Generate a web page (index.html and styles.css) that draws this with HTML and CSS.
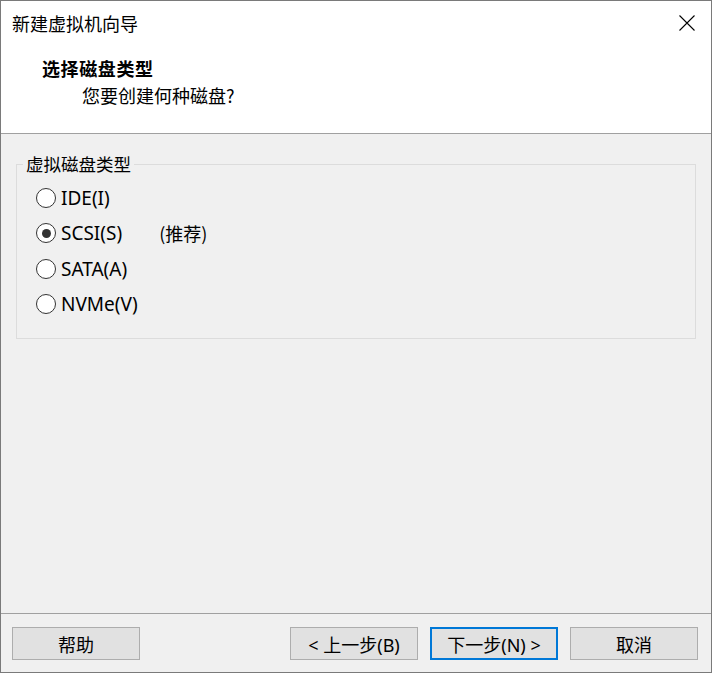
FILE: index.html
```html
<!DOCTYPE html>
<html lang="zh-CN">
<head>
<meta charset="utf-8">
<title>新建虚拟机向导</title>
<link rel="stylesheet" href="styles.css">
</head>
<body>
<div class="window">
  <div class="top">
    <div class="titlebar">
      <span class="title">新建虚拟机向导</span>
      <span class="close">
        <svg width="16" height="16" viewBox="0 0 16 16"><path d="M0.5 0.5 L15.5 15.5 M15.5 0.5 L0.5 15.5" stroke="#000" stroke-width="1.1" fill="none"/></svg>
      </span>
    </div>
    <div class="header">
      <div class="heading">选择磁盘类型</div>
      <div class="subheading">您要创建何种磁盘?</div>
    </div>
  </div>
  <div class="body">
    <fieldset class="group">
      <legend class="legend">虚拟磁盘类型</legend>
      <div class="option"><span class="radio"></span><span class="label">IDE(I)</span></div>
      <div class="option"><span class="radio checked"></span><span class="label">SCSI(S)</span><span class="note">(推荐)</span></div>
      <div class="option"><span class="radio"></span><span class="label">SATA(A)</span></div>
      <div class="option"><span class="radio"></span><span class="label">NVMe(V)</span></div>
    </fieldset>
  </div>
  <div class="footer">
    <button class="btn">帮助</button>
    <span class="spacer"></span>
    <button class="btn">&lt; 上一步(B)</button>
    <button class="btn default">下一步(N) &gt;</button>
    <button class="btn">取消</button>
  </div>
</div>
</body>
</html>
```

FILE: styles.css
```css
html, body {
  margin: 0;
  padding: 0;
}
body {
  font-family: "Noto Sans", "Noto Sans CJK SC", sans-serif;
  color: #000;
  background: #f0f0f0;
}
.window {
  box-sizing: border-box;
  width: 712px;
  height: 673px;
  border: 1px solid #7a7a7a;
  display: flex;
  flex-direction: column;
  background: #f0f0f0;
}
.top {
  background: #fff;
  height: 132px;
  border-bottom: 1px solid #a0a0a0;
  flex: none;
}
.titlebar {
  height: 43px;
  display: flex;
  align-items: center;
  justify-content: space-between;
  padding: 0 16px 0 11px;
}
.title {
  font-family: "Noto Sans CJK SC", sans-serif;
  font-size: 18px;
  line-height: 24px;
}
.close {
  display: flex;
  width: 16px;
  height: 16px;
}
.header {
  padding-top: 10px;
}
.heading {
  font-family: "Noto Sans CJK SC", sans-serif;
  font-weight: bold;
  font-size: 18px;
  letter-spacing: 0.6px;
  line-height: 28px;
  padding-left: 41px;
}
.subheading {
  font-family: "Noto Sans CJK SC", sans-serif;
  font-size: 18px;
  line-height: 27px;
  padding-left: 81px;
}
.body {
  flex: 1;
  padding: 20px 15px 0 15px;
}
.group {
  margin: 0;
  padding: 6px 0 16px 0;
  border: 1px solid #dcdcdc;
  min-width: 0;
}
.legend {
  font-family: "Noto Sans CJK SC", sans-serif;
  font-size: 17.5px;
  line-height: 20px;
  padding: 0 3px;
  margin-left: 6px;
}
.option {
  height: 35.5px;
  display: flex;
  align-items: center;
  padding-left: 19px;
}
.radio {
  box-sizing: border-box;
  width: 20px;
  height: 20px;
  border: 1px solid #333;
  border-radius: 50%;
  background: #fff;
  display: flex;
  align-items: center;
  justify-content: center;
  flex: none;
}
.radio.checked::after {
  content: "";
  width: 9px;
  height: 9px;
  border-radius: 50%;
  background: #333;
}
.label {
  margin-left: 5px;
  font-size: 19px;
}
.note {
  margin-left: 37px;
  font-family: "Noto Sans CJK SC", sans-serif;
  font-size: 18px;
}
.footer {
  flex: none;
  border-top: 1px solid #a0a0a0;
  padding: 13px 13px 12px 11px;
  display: flex;
  gap: 12px;
}
.spacer {
  flex: 1;
}
.btn {
  box-sizing: border-box;
  width: 128px;
  height: 33px;
  background: #e1e1e1;
  border: 1px solid #adadad;
  border-radius: 0;
  font-family: "Noto Sans", "Noto Sans CJK SC", sans-serif;
  font-size: 18px;
  color: #000;
  padding: 0;
  margin: 0;
}
.btn.default {
  border: 2px solid #0078d7;
}
```
